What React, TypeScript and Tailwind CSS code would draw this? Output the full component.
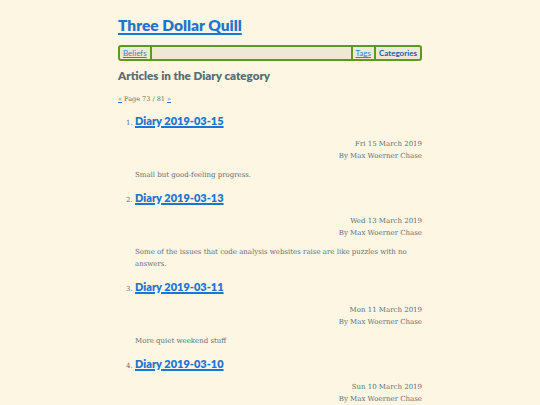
import React from "react";

type Item = { title: string; date: string; summary: string };

const items: Item[] = [
  { title: "Diary 2019-03-15", date: "Fri 15 March 2019", summary: "Small but good-feeling progress." },
  {
    title: "Diary 2019-03-13",
    date: "Wed 13 March 2019",
    summary: "Some of the issues that code analysis websites raise are like puzzles with no answers.",
  },
  { title: "Diary 2019-03-11", date: "Mon 11 March 2019", summary: "More quiet weekend stuff" },
  { title: "Diary 2019-03-10", date: "Sun 10 March 2019", summary: "" },
];

export default function App() {
  return (
    <div className="min-h-screen bg-[#fdf6e3] text-[#5f7177]">
      <div className="mx-auto w-[304px] pt-[14px] pb-4">
        <h1 className="font-[family-name:Lato,sans-serif] text-[15.5px] font-extrabold leading-[22px]">
          <a href="#" className="text-[#1e75cf] underline decoration-[1.5px] underline-offset-2">
            Three Dollar Quill
          </a>
        </h1>

        <nav className="mt-[9px] flex h-[16px] items-stretch rounded-[3px] border-2 border-[#5c9a1e] bg-[#eee8d5] font-[family-name:Lato,sans-serif] text-[8px] leading-[12px]">
          <a href="#" className="border-r-2 border-[#5c9a1e] px-[3px] text-[#3a7ec6] underline">
            Beliefs
          </a>
          <div className="flex-1" />
          <a href="#" className="border-l-2 border-[#5c9a1e] px-[3px] text-[#3a7ec6] underline">
            Tags
          </a>
          <a href="#" className="border-l-2 border-[#5c9a1e] px-[3px] font-bold text-[#1e5fa8]">
            Categories
          </a>
        </nav>

        <h2 className="mt-[6px] font-[family-name:Lato,sans-serif] text-[11.6px] font-extrabold leading-[18px] text-[#586e75]">
          Articles in the Diary category
        </h2>

        <div className="mt-[8px] font-[family-name:'DejaVu_Serif',serif] text-[6.5px] leading-[12px]">
          <a href="#" className="text-[#2f76c4] underline">«</a> Page 73 / 81{" "}
          <a href="#" className="text-[#2f76c4] underline">»</a>
        </div>

        <ol className="mt-[8px] list-decimal pl-[17px] font-[family-name:'DejaVu_Serif',serif] text-[7px] leading-[12px] marker:text-[#5f7177]">
          {items.map((it, i) => (
            <li key={i} className={i === 0 ? "" : "mt-[9px]"}>
              <h3 className="inline font-[family-name:Lato,sans-serif] text-[11px] font-extrabold leading-[16px]">
                <a href="#" className="text-[#1e75cf] underline decoration-[1.5px]">
                  {it.title}
                </a>
              </h3>
              <div className="mt-[9px] text-right">
                <div>{it.date}</div>
                <div>By Max Woerner Chase</div>
              </div>
              {it.summary && <p className="mt-[7px]">{it.summary}</p>}
            </li>
          ))}
        </ol>
      </div>
    </div>
  );
}
